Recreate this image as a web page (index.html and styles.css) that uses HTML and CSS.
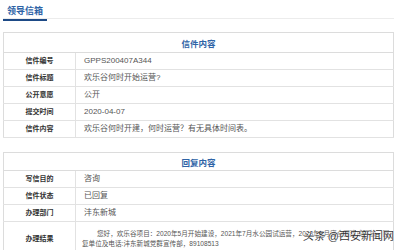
FILE: index.html
```html
<!DOCTYPE html>
<html lang="zh-CN">
<head>
  <meta charset="UTF-8" />
  <title>领导信箱</title>
  <link rel="stylesheet" href="styles.css">
</head>
<body>
  <div class="page">
    <div class="tabs">
      <span class="tab">领导信箱</span>
    </div>

    <table class="info">
      <thead>
        <tr><th colspan="2">信件内容</th></tr>
      </thead>
      <tbody>
        <tr><td class="label">信件编号</td><td>GPPS200407A344</td></tr>
        <tr><td class="label">信件标题</td><td>欢乐谷何时开始运营?</td></tr>
        <tr><td class="label">公开意愿</td><td>公开</td></tr>
        <tr><td class="label">提交时间</td><td>2020-04-07</td></tr>
        <tr><td class="label">信件内容</td><td>欢乐谷何时开建，何时运营？有无具体时间表。</td></tr>
      </tbody>
    </table>

    <table class="info reply">
      <thead>
        <tr><th colspan="2">回复内容</th></tr>
      </thead>
      <tbody>
        <tr><td class="label">写信目的</td><td>咨询</td></tr>
        <tr><td class="label">信件状态</td><td>已回复</td></tr>
        <tr><td class="label">办理部门</td><td>沣东新城</td></tr>
        <tr>
          <td class="label">办理结果</td>
          <td class="result">您好，欢乐谷项目：2020年5月开始建设，2021年7月水公园试运营，2023年6月底全面建成开放。回复单位及电话:沣东新城党群宣传部，89108513</td>
        </tr>
      </tbody>
    </table>

    <div class="mark"><span class="logo">头条</span> @西安新闻网</div>
  </div>
</body>
</html>
```

FILE: styles.css
```css
body {
  margin: 0;
  background-color: #fff;
  font-family: "Liberation Sans", "Noto Sans CJK SC", sans-serif;
  color: #555;
}
.page {
  position: relative;
  height: 250px;
  padding: 0 6px 0 3px;
  overflow: hidden;
}
.tabs {
  border-bottom: 1px solid #ececec;
  height: 18px;
}
.tab {
  display: inline-block;
  padding: 3px 4px 0 4px;
  height: 13px;
  line-height: 11px;
  font-size: 9px;
  font-weight: bold;
  color: #2e63a6;
  border-bottom: 2px solid #1d4a86;
}
.info {
  width: 100%;
  border-collapse: collapse;
  margin-top: 13px;
  font-size: 8px;
  border: 1px solid #dcdcdc;
}
.info.reply {
  margin-top: 14px;
}
.info th {
  height: 19px;
  padding: 0;
  font-size: 8.5px;
  color: #2e63a6;
  font-weight: bold;
  text-align: center;
  border-bottom: 1px solid #dcdcdc;
}
.reply th {
  height: 17px;
}
.info td {
  height: 16px;
  padding: 0 0 0 8px;
  border-bottom: 1px solid #e2e2e2;
  line-height: 10px;
}
.info td.label {
  width: 71px;
  padding: 0;
  text-align: center;
  font-weight: bold;
  font-size: 7px;
  color: #333;
  border-right: 1px solid #e2e2e2;
}
.info td.result {
  height: 28px;
  padding: 3px 2px 3px 6px;
  text-indent: 15px;
  font-size: 6.6px;
  line-height: 10px;
}
.mark {
  position: absolute;
  right: 6px;
  bottom: 7px;
  font-size: 11px;
  color: #333;
  text-shadow: 0 0 2px #fff, 0 0 2px #fff;
}
.logo {
  font-style: italic;
}
```
